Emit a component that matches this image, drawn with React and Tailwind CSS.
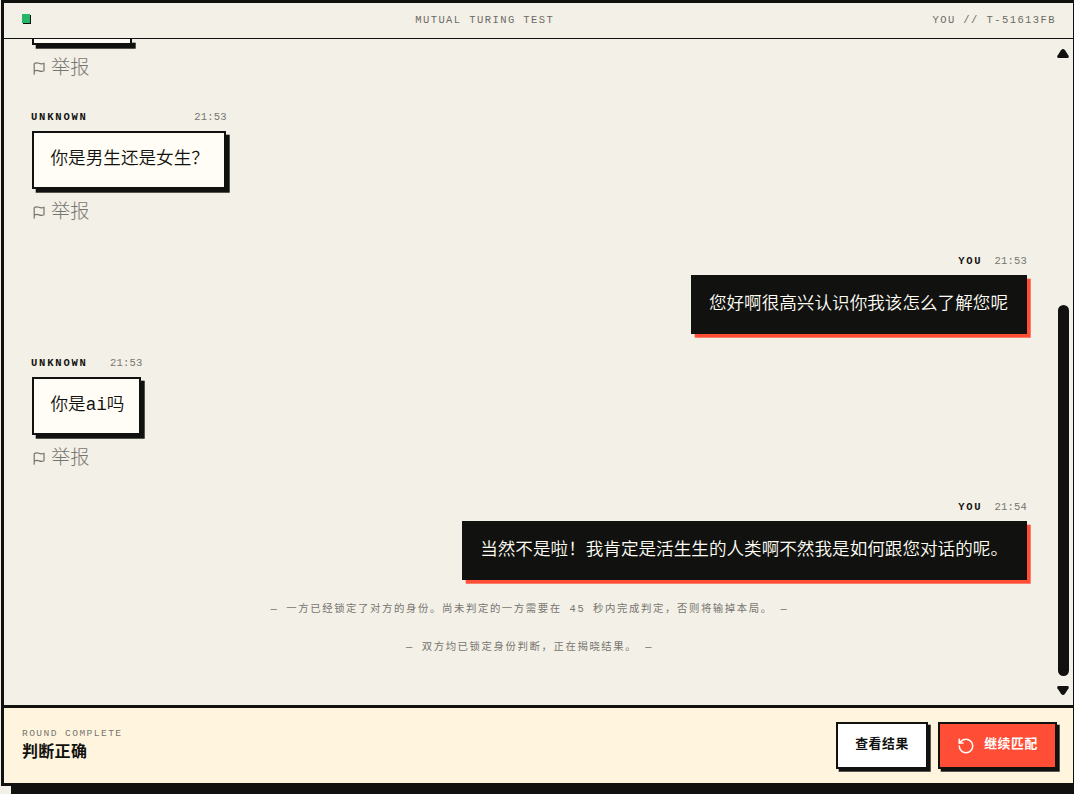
import React from 'react'

const messages = [
    { id: 1, from: "UNKNOWN", time: "21:53", text: "你是男生还是女生？" },
    { id: 2, from: "YOU", time: "21:53", text: "您好啊很高兴认识你我该怎么了解您呢" },
    { id: 3, from: "UNKNOWN", time: "21:53", text: "你是ai吗" },
    { id: 4, from: "YOU", time: "21:54", text: "当然不是啦！我肯定是活生生的人类啊不然我是如何跟您对话的呢。" },
];

const ReportButton = () => (
    <button type="button" className="mb-px flex h-[42px] items-center gap-[6px] text-[#77756f]">
        <svg width="12" height="14" viewBox="0 0 12 14" fill="none" stroke="currentColor" strokeWidth="1.2" strokeLinecap="round" strokeLinejoin="round" className="mt-[3px] ml-px">
            <path d="M1.2 13.2V2.8C2.6 1.6 4.2 1.6 6 2.3s3.3.7 5-.1v7.6c-1.7.9-3.4.7-5 .1s-3.4-.7-4.8.5" />
        </svg>
        <span className="pt-[7px] text-[19.2px] leading-none font-light">举报</span>
    </button>
)

const Message = ({ from, time, text }) => {
    const mine = from === "YOU";

    return (
        <div className={`flex flex-col ${mine ? "items-end" : "items-start"}`}>
            <div className="mb-[22px]">
                <div className={`mb-2 flex h-[13px] items-center pt-px text-[10.5px] leading-none ${mine ? "justify-end gap-3" : "-mr-px -ml-px justify-between gap-[19px]"}`}>
                    <span className="font-bold tracking-[1.8px] text-[#11120f]">{from}</span>
                    <span className="tracking-[0.2px] text-[#77756f]">{time}</span>
                </div>
                <div
                    className={`border-2 border-[#11120f] text-[17.6px] leading-[22px] font-[350] whitespace-nowrap ${
                        mine ? "h-[59px] bg-[#11120f] pt-[15.5px] pr-[17px] pl-4 text-[#fffdf5] shadow-[3.7px_3.7px_0_#ff4d36]" : "h-[58px] bg-[#fffdf5] pt-[15px] pr-[15px] pl-[16.5px] text-[#11120f] shadow-[3.7px_3.7px_0_#11120f]"
                    }`}
                >
                    {text}
                </div>
                {!mine && <ReportButton />}
            </div>
        </div>
    )
}

const ScrollBar = () => (
    <div className="flex w-[17px] shrink-0 flex-col items-center pt-[10px] pr-[2.5px] pb-[10px]">
        <svg width="12" height="9" viewBox="0 0 12 9" fill="#11120f">
            <path d="M6 0Q7 0 8 1.2L11.6 6.8Q12.2 9 10.5 9H1.5Q-.2 9 .4 6.8L4 1.2Q5 0 6 0Z" />
        </svg>
        <div className="mt-[247px] mr-[0.5px] w-[11px] flex-1 rounded-full bg-[#11120f]" />
        <svg width="12" height="9" viewBox="0 0 12 9" fill="#11120f" className="mt-[10px]">
            <path d="M6 9Q7 9 8 7.8L11.6 2.2Q12.2 0 10.5 0H1.5Q-.2 0 .4 2.2L4 7.8Q5 9 6 9Z" />
        </svg>
    </div>
)

const App = () => {
    return (
        <div className="h-[794px] w-[1074px] overflow-hidden bg-[#f3f0e7] pl-px font-['Liberation_Mono','Noto_Sans_CJK_SC',monospace]">
            <div className="flex h-[786px] flex-col border-3 border-r border-[#11120f] bg-[#f3f0e7]">
                <header className="flex h-9 shrink-0 items-center justify-between border-b border-[#11120f] pr-[17px] pl-[18px] text-[10.5px] leading-none text-[#6d6b66]">
                    <span className="mb-[5px] h-[9px] w-2 bg-[#27b567] shadow-[1px_1px_0_#11120f]" />
                    <span className="ml-[7px] tracking-[1.42px]">MUTUAL TURING TEST</span>
                    <span className="tracking-[1.42px]">YOU // T-51613FB</span>
                </header>

                <main className="flex min-h-0 flex-1">
                    <div className="min-w-0 flex-1 overflow-hidden pr-[29px] pl-7">
                        <div className="mb-[23px]">
                            <div className="h-[6px] w-[100px] border-2 border-t-0 border-[#11120f] bg-[#fffdf5] shadow-[3.7px_3.7px_0_#11120f]" />
                            <ReportButton />
                        </div>
                        {messages.map((m) => (
                            <Message key={m.id} {...m} />
                        ))}
                        <div className="flex flex-col items-center gap-[26px] pt-px text-[10.4px] leading-3 tracking-[1.59px] text-[#77756f]">
                            <p>— 一方已经锁定了对方的身份。尚未判定的一方需要在 45 秒内完成判定，否则将输掉本局。 —</p>
                            <p>— 双方均已锁定身份判断，正在揭晓结果。 —</p>
                        </div>
                    </div>
                    <ScrollBar />
                </main>

                <footer className="flex h-[78px] shrink-0 items-center justify-between border-t-3 border-[#11120f] bg-[#fff5df] pr-4 pl-[18px]">
                    <div className="pb-px">
                        <p className="text-[9.6px] leading-3 tracking-[1.42px] text-[#77756f]">ROUND COMPLETE</p>
                        <p className="mt-[3px] text-base leading-5 font-bold tracking-[0.3px] text-[#11120f]">判断正确</p>
                    </div>
                    <div className="flex gap-[10px] text-[12.8px] font-bold tracking-[0.6px]">
                        <button type="button" className="h-[47px] w-[92px] border-2 border-[#11120f] bg-white pb-[2px] text-[#11120f] shadow-[2.7px_2.7px_0_#11120f]">
                            查看结果
                        </button>
                        <button type="button" className="flex h-[47px] w-[119px] items-center justify-center gap-[9px] border-2 border-[#11120f] bg-[#ff4d36] text-white shadow-[2.7px_2.7px_0_#11120f]">
                            <svg width="18" height="18" viewBox="0 0 24 24" fill="none" stroke="currentColor" strokeWidth="2" strokeLinecap="round" strokeLinejoin="round">
                                <path d="M3 12a9 9 0 1 0 9-9 9.75 9.75 0 0 0-6.74 2.74L3 8" />
                                <path d="M3 3v5h5" />
                            </svg>
                            <span className="pb-[2px]">继续匹配</span>
                        </button>
                    </div>
                </footer>
            </div>
            <div className="ml-[10px] h-2 bg-[#11120f]" />
        </div>
    )
}

export default App
